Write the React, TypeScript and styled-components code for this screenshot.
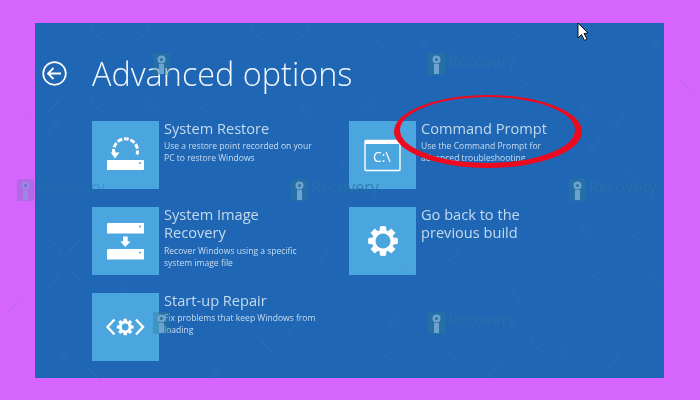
import React from 'react'
import styled, { createGlobalStyle } from 'styled-components'

const GlobalStyle = createGlobalStyle`
  html, body {
    margin: 0;
    padding: 0;
    width: 700px;
    height: 400px;
    overflow: hidden;
    background: #d565fd;
  }
`

const Page = styled.div`
  width: 700px;
  height: 400px;
  padding: 23px 36px 22px 35px;
  box-sizing: border-box;
  position: relative;
  overflow: hidden;
  background: #d565fd;
  font-family: 'Open Sans', 'Liberation Sans', sans-serif;
  filter: blur(0.45px);
`

const Screen = styled.main`
  height: 100%;
  background: #1f66b4;
  color: #fff;
  padding: 29px 0 0 7px;
  box-sizing: border-box;
`

const Header = styled.header`
  display: flex;
  align-items: center;
  gap: 25px;
  height: 42px;
  margin-bottom: 27px;
`

const BackButton = styled.svg`
  width: 25px;
  height: 25px;
  display: block;
  flex: none;
`

const Title = styled.h1`
  margin: 0;
  font-size: 32.4px;
  line-height: 42px;
  font-weight: 300;
  color: #f1f6fb;
`

const Options = styled.div`
  display: grid;
  grid-template-columns: 257px 230px;
  grid-auto-rows: 68px;
  row-gap: 18px;
  margin-left: 50px;
`

const Option = styled.div`
  display: flex;
  gap: 5px;
  min-width: 0;
`

const Tile = styled.div`
  width: 67px;
  height: 68px;
  flex: none;
  background: #4ba5de;
  display: flex;
  align-items: center;
  justify-content: center;
`

const TileIcon = styled.svg`
  width: 67px;
  height: 68px;
  display: block;
`

const Copy = styled.div`
  min-width: 0;
`

const Name = styled.div`
  font-size: 14.6px;
  line-height: 18.4px;
  margin-top: -2px;
  color: #c4daee;
`

const Description = styled.div`
  font-size: 8.55px;
  line-height: 12px;
  margin-top: 3px;
  color: #c9def0;
`

const Overlay = styled.svg`
  position: absolute;
  left: 0;
  top: 0;
  width: 700px;
  height: 400px;
  pointer-events: none;
`

const MarkLabel = styled.text`
  font-family: 'Open Sans', 'Liberation Sans', sans-serif;
  font-size: 16px;
`

const RestoreIcon = () => (
  <TileIcon viewBox="0 0 67 68">
    <path
      d="M22 33 A12 12 0 1 1 45 33.5"
      fill="none"
      stroke="#fff"
      strokeWidth="3"
      strokeDasharray="5 1.7"
    />
    <path d="M18.7 31.5 H27.5 L23 37.5 Z" fill="#fff" />
    <path d="M16 39 H51 Q52 39 52 40 V48 Q52 49 51 49 H15 V40 Q15 39 16 39 Z" fill="#fff" />
    <circle cx="48" cy="42" r="1" fill="#4ba5de" />
  </TileIcon>
)

const ImageRecoveryIcon = () => (
  <TileIcon viewBox="0 0 67 68">
    <path d="M16 16 H52 V26.5 H15 V17 Q15 16 16 16 Z" fill="#fff" />
    <circle cx="48" cy="19.5" r="1" fill="#4ba5de" />
    <path d="M31 29.5 H35.7 V34.5 H38.5 L33.3 40 L28.2 34.5 H31 Z" fill="#fff" />
    <path d="M16 42 H52 V52.5 H15 V43 Q15 42 16 42 Z" fill="#fff" />
    <circle cx="48" cy="45.5" r="1" fill="#4ba5de" />
  </TileIcon>
)

const gearPath = (cx: number, cy: number, outer: number, inner: number, teeth: number) => {
  const points: string[] = []
  for (let i = 0; i < teeth; i++) {
    const a = (i * 2 * Math.PI) / teeth
    const w = Math.PI / teeth
    const at = (r: number, t: number) =>
      `${(cx + r * Math.sin(t)).toFixed(2)} ${(cy - r * Math.cos(t)).toFixed(2)}`
    points.push(at(inner, a - w * 0.75), at(outer, a - w * 0.45), at(outer, a + w * 0.45), at(inner, a + w * 0.75))
  }
  return `M${points.join(' L')} Z`
}

const RepairIcon = () => (
  <TileIcon viewBox="0 0 67 68">
    <path d="M22.5 26.5 L15.5 34 L22.5 41.5" fill="none" stroke="#fff" strokeWidth="2.4" />
    <path d="M44 26.5 L51 34 L44 41.5" fill="none" stroke="#fff" strokeWidth="2.4" />
    <path d={gearPath(33.2, 34, 8.5, 6.3, 8)} fill="#fff" />
    <circle cx="33.2" cy="34" r="3.4" fill="#4ba5de" />
  </TileIcon>
)

const CommandIcon = () => (
  <TileIcon viewBox="0 0 67 68">
    <rect x="16" y="19.5" width="35" height="30" rx="1" fill="none" stroke="#fff" strokeWidth="1.4" />
    <rect x="16" y="19.5" width="35" height="3.5" fill="#fff" />
    <text x="24" y="40.5" fontFamily="'Open Sans', sans-serif" fontSize="14" fill="#fff">
      C:\
    </text>
  </TileIcon>
)

const GearIcon = () => (
  <TileIcon viewBox="0 0 67 68">
    <path d={gearPath(34, 34, 14.5, 10.5, 8)} fill="#fff" strokeLinejoin="round" stroke="#fff" strokeWidth="1" />
    <circle cx="34" cy="34" r="7.5" fill="#4ba5de" />
  </TileIcon>
)

const watermarks = [
  { x: 428, y: 53, label: true, onPage: false },
  { x: 153, y: 53, label: false, onPage: false },
  { x: 17, y: 179, label: true, onPage: true },
  { x: 291, y: 179, label: true, onPage: false },
  { x: 569, y: 179, label: true, onPage: false },
  { x: 428, y: 312, label: true, onPage: false },
  { x: 153, y: 312, label: false, onPage: false },
]

const ticks = [
  [90, 28, 1], [150, 28, -1], [250, 28, 1], [310, 28, -1], [375, 38, 1], [430, 38, -1], [510, 28, 1], [590, 28, -1],
  [650, 38, 1], [60, 100, -1], [90, 100, 1], [145, 100, 1], [210, 100, -1], [300, 105, 1], [375, 100, -1], [480, 90, 1],
  [530, 80, -1], [580, 105, 1], [625, 115, -1], [60, 120, -1], [20, 110, 1], [680, 80, 1], [625, 170, 1], [600, 140, -1],
  [50, 240, 1], [80, 240, -1], [60, 275, -1], [70, 270, 1], [120, 285, 1], [20, 300, -1], [330, 250, -1], [400, 265, 1],
  [460, 250, -1], [510, 290, 1], [580, 225, 1], [640, 230, -1], [600, 270, -1], [650, 275, 1], [400, 315, -1], [380, 350, 1],
  [445, 350, 1], [500, 365, -1], [530, 340, 1], [570, 345, -1], [620, 355, -1], [260, 340, 1], [300, 320, -1], [90, 370, 1],
  [220, 368, -1], [70, 350, -1], [340, 160, 1], [200, 140, -1],
]

const Overlays = () => (
  <Overlay viewBox="0 0 700 400">
    {ticks.map(([x, y, d], i) => (
      <line
        key={i}
        x1={x}
        y1={y}
        x2={x + 12 * d}
        y2={y + 12}
        stroke="#5a86b8"
        strokeOpacity="0.3"
        strokeWidth="1"
      />
    ))}
    {watermarks.map(({ x, y, label, onPage }) => (
      <g key={`${x}-${y}`} opacity={onPage ? 0.55 : 1}>
        <rect x={x} y={y} width="17" height="22" fill="#2e7d92" fillOpacity="0.4" />
        <circle cx={x + 8.5} cy={y + 6.5} r="4" fill="#6fa3cf" />
        <circle cx={x + 8.5} cy={y + 6.5} r="1.5" fill="#2c6f9a" />
        <rect x={x + 6} y={y + 11} width="5" height="10" fill="#6fa3cf" />
        {label && (
          <MarkLabel x={x + 20} y={y + 14} fill="#2a74a6" fillOpacity="0.75">
            Recovery
          </MarkLabel>
        )}
      </g>
    ))}
    <path
      fillRule="evenodd"
      fill="#ee0a1e"
      d="M394 131.5 A94 36.5 0 1 0 582 131.5 A94 36.5 0 1 0 394 131.5 Z M400 130 A87.5 33 0 1 0 575 130 A87.5 33 0 1 0 400 130 Z"
    />
    <path
      d="M578 23 V38 L581.5 34.5 L584.5 40.5 L587 39 L584 33.5 L588 33 Z"
      fill="#fff"
      stroke="#111"
      strokeWidth="1"
    />
  </Overlay>
)

const App = () => (
  <Page>
    <GlobalStyle />
    <Screen>
      <Header>
        <BackButton viewBox="0 0 25 25">
          <circle cx="12.5" cy="12.5" r="11.3" fill="none" stroke="#fff" strokeWidth="1.7" />
          <path d="M19 12.5 H6.5 M11.5 7 L6 12.5 L11.5 18" fill="none" stroke="#fff" strokeWidth="1.8" />
        </BackButton>
        <Title>Advanced options</Title>
      </Header>
      <Options>
        <Option>
          <Tile><RestoreIcon /></Tile>
          <Copy>
            <Name>System Restore</Name>
            <Description>Use a restore point recorded on your<br />PC to restore Windows</Description>
          </Copy>
        </Option>
        <Option>
          <Tile><CommandIcon /></Tile>
          <Copy>
            <Name>Command Prompt</Name>
            <Description>Use the Command Prompt for<br />advanced troubleshooting</Description>
          </Copy>
        </Option>
        <Option>
          <Tile><ImageRecoveryIcon /></Tile>
          <Copy>
            <Name>System Image<br />Recovery</Name>
            <Description>Recover Windows using a specific<br />system image file</Description>
          </Copy>
        </Option>
        <Option>
          <Tile><GearIcon /></Tile>
          <Copy>
            <Name>Go back to the<br />previous build</Name>
          </Copy>
        </Option>
        <Option>
          <Tile><RepairIcon /></Tile>
          <Copy>
            <Name>Start-up Repair</Name>
            <Description>Fix problems that keep Windows from<br />loading</Description>
          </Copy>
        </Option>
      </Options>
    </Screen>
    <Overlays />
  </Page>
)

export default App
